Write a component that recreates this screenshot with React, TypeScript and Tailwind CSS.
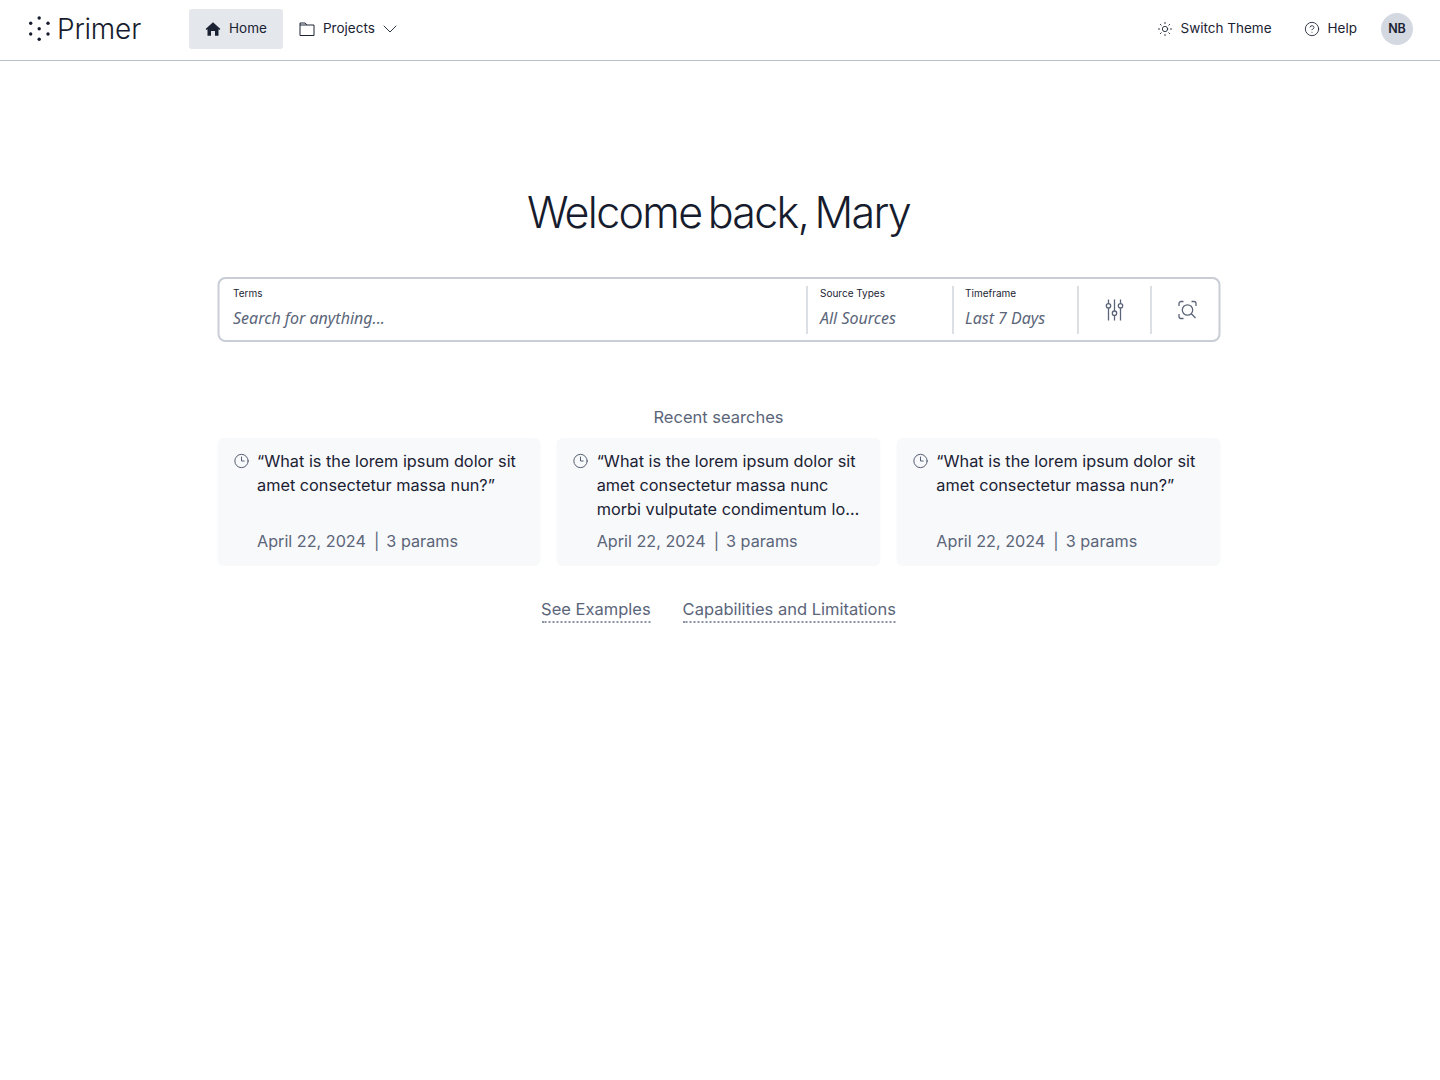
import { Sun, CircleHelp, Clock3, ChevronDown } from "lucide-react";

function Logo() {
  const dots: [number, number][] = [
    [39.2, 18], [30.7, 23.3], [48, 23.3], [39.2, 28.7], [30.7, 34], [48, 34], [39.2, 39.3],
  ];
  return (
    <svg width="26" height="26" viewBox="27 16 26 26" className="mr-[4px] shrink-0 text-[#161c2d]" aria-hidden="true">
      {dots.map(([x, y], i) => <circle key={i} cx={x} cy={y} r={1.7} fill="currentColor" />)}
    </svg>
  );
}

function HomeIcon() {
  return (
    <svg width="16" height="16" viewBox="0 0 16 16" className="shrink-0" aria-hidden="true">
      <path fill="currentColor" fillRule="evenodd" d="M8 1.2 15.4 8 14.3 9 13.5 8.3V14.8H10V10H6V14.8H2.5V8.3L1.7 9 .6 8Z" />
    </svg>
  );
}

function FolderIcon() {
  return (
    <svg width="16" height="16" viewBox="0 0 16 16" fill="none" stroke="currentColor" strokeWidth="1" className="shrink-0" aria-hidden="true">
      <path d="M1 2H6.3L7.6 4H15V14.5H1ZM1 4H7.6" />
    </svg>
  );
}

function SlidersIcon() {
  return (
    <svg width="20" height="24" viewBox="0 0 20 24" fill="none" stroke="currentColor" strokeWidth="1.3" aria-hidden="true">
      <path d="M4 1.5V5.5M4 10V22.5M10 1.5V13M10 17.5V22.5M16 1.5V5.5M16 10V22.5" />
      <circle cx="4" cy="7.8" r="2.2" />
      <circle cx="10" cy="15.2" r="2.2" />
      <circle cx="16" cy="7.8" r="2.2" />
    </svg>
  );
}

function ScanIcon() {
  return (
    <svg width="20" height="20" viewBox="0 0 20 20" fill="none" stroke="currentColor" strokeWidth="1.3" aria-hidden="true">
      <path d="M1.5 6V3.5A2 2 0 0 1 3.5 1.5H6M14 1.5H16.5A2 2 0 0 1 18.5 3.5V6M1.5 14V16.5A2 2 0 0 0 3.5 18.5H6" />
      <circle cx="10" cy="10" r="5.2" />
      <path d="M13.8 13.8 18 18" />
    </svg>
  );
}

function Field({ label, value, className }: { label: string; value: string; className: string }) {
  return (
    <div className={className}>
      <div className="text-[10px] leading-[14px] text-[#1c2434]">{label}</div>
      <div className="mt-[6px] font-['Noto_Sans',sans-serif] text-[16px] italic leading-[24px] text-[#5b6579]">{value}</div>
    </div>
  );
}

function Card({ lines }: { lines: string }) {
  return (
    <div className="flex h-[128px] flex-1 gap-[8px] rounded-[6px] bg-[#f8f9fb] px-[16px] pt-[11px]">
      <Clock3 size={16} strokeWidth={1.4} className="mt-[4px] shrink-0 text-[#4a5468]" />
      <div className="flex h-full min-w-0 flex-col">
        <p className="h-[72px] text-[16.3px] leading-[24px] text-[#1a2233]">{lines}</p>
        <p className="mt-[8px] text-[16.2px] leading-[24px] text-[#5b6579]">
          April 22, 2024<span className="ml-[8px] mr-[7px]">|</span>3 params
        </p>
      </div>
    </div>
  );
}

export default function App() {
  return (
    <div className="min-h-[1080px] bg-white font-['Inter',sans-serif] text-[#1a2233]">
      <header className="flex h-[61px] items-center border-b border-[#b9c0ca] pb-[2px] pl-[27px] pr-[27px]">
        <div className="flex items-center">
          <Logo />
          <span className="text-[28px] font-light leading-none tracking-[-0.2px] text-[#161c2d]">Primer</span>
        </div>
        <nav className="ml-[48px] flex items-center">
          <div className="flex h-[40px] w-[94px] items-center gap-[8px] rounded-[3px] bg-[#e4e7eb] pl-[16px] text-[13.5px]">
            <HomeIcon />
            <span className="mb-[2px]">Home</span>
          </div>
          <div className="ml-[16px] flex items-center gap-[8px] text-[13.5px]">
            <FolderIcon />
            <span className="mb-[2px]">Projects</span>
            <ChevronDown size={24} strokeWidth={0.9} className="-ml-[5px]" />
          </div>
        </nav>
        <div className="ml-auto flex items-center text-[13.5px]">
          <div className="flex items-center gap-[8px]">
            <Sun size={16} strokeWidth={1.3} />
            <span className="mb-[2px]">Switch Theme</span>
          </div>
          <div className="ml-[32px] flex items-center gap-[8px]">
            <CircleHelp size={16} strokeWidth={1.3} />
            <span className="mb-[2px]">Help</span>
          </div>
          <div className="ml-[24px] flex size-[32px] items-center justify-center rounded-full bg-[#d3d8e1] text-[12.5px] font-semibold">NB</div>
        </div>
      </header>

      <main className="mx-auto w-[1003px] -translate-x-[1.5px]">
        <h1 className="mt-[123px] text-center text-[43px] font-light leading-[56px] tracking-[-1.7px] text-[#161c2d] [word-spacing:-4px]">Welcome back, Mary</h1>

        <div className="mt-[37px] flex h-[65px] items-center rounded-[8px] border-2 border-[#c9ced6]">
          <Field label="Terms" value="Search for anything..." className="h-[48px] flex-1 pl-[14px]" />
          <Field label="Source Types" value="All Sources" className="h-[48px] w-[146px] border-l border-[#b9c0ca] pl-[13px]" />
          <Field label="Timeframe" value="Last 7 Days" className="h-[48px] w-[125px] border-l border-[#b9c0ca] pl-[12px]" />
          <div className="flex h-[48px] w-[73px] items-center justify-center border-l border-[#b9c0ca] text-[#5b6579]">
            <SlidersIcon />
          </div>
          <div className="flex h-[48px] w-[68px] items-center justify-center border-l border-[#b9c0ca] pl-[6px] text-[#5b6579]">
            <ScanIcon />
          </div>
        </div>

        <h2 className="mt-[63px] text-center text-[16.5px] font-normal leading-[24px] text-[#5b6579]">Recent searches</h2>

        <div className="mt-[9px] flex gap-[16px]">
          <Card lines="“What is the lorem ipsum dolor sit amet consectetur massa nun?”" />
          <Card lines="“What is the lorem ipsum dolor sit amet consectetur massa nunc morbi vulputate condimentum lo…" />
          <Card lines="“What is the lorem ipsum dolor sit amet consectetur massa nun?”" />
        </div>

        <div className="mt-[31px] flex justify-center gap-[32px] text-[16.5px] leading-[24px] text-[#5b6579]">
          <span className="border-b-2 border-dotted border-[#8a93a3]">See Examples</span>
          <span className="border-b-2 border-dotted border-[#8a93a3]">Capabilities and Limitations</span>
        </div>
      </main>
    </div>
  );
}
